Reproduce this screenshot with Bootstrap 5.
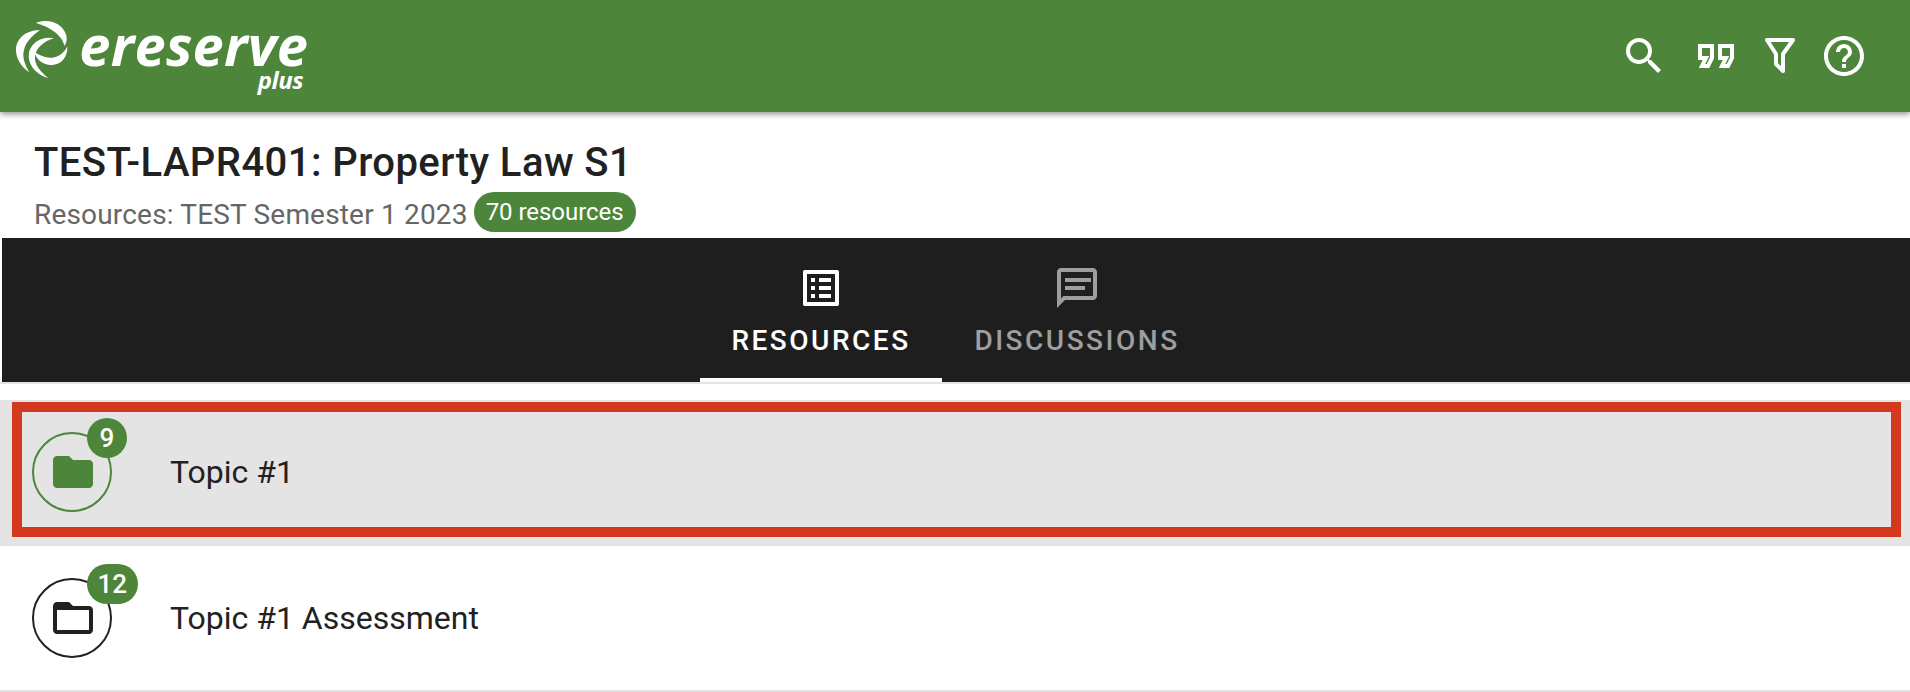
<!DOCTYPE html>
<html lang="en">
<head>
<meta charset="utf-8">
<title>eReserve Plus</title>
<link href="https://cdn.jsdelivr.net/npm/bootstrap@5.3.0/dist/css/bootstrap.min.css" rel="stylesheet">
<style>
html,body{height:100%;}
body{font-family:Roboto,"Liberation Sans",sans-serif;color:#212121;background:#fff;overflow:hidden;}
.top-bar{height:112px;background:#4d853a;box-shadow:0 2px 6px rgba(0,0,0,.45);position:relative;z-index:2;padding:0 42px 0 15px;}
.brand-wrap{height:80px;margin-top:-14px;}
.brand-mark{width:53.33px;height:60px;flex:none;margin-right:11px;margin-top:2px;}
.brand-stack{line-height:1;color:#fff;font-family:"Open Sans",sans-serif;font-style:italic;font-weight:700;padding:8px 0 2px;margin-bottom:-7px;}
.brand-name{font-size:56px;letter-spacing:.2px;line-height:42px;display:block;}
.brand-sub{font-size:24px;font-weight:700;line-height:18px;display:block;text-align:right;margin-top:6px;margin-right:5px;letter-spacing:-.5px;}
.top-icon{width:48px;height:48px;fill:#fff;display:block;}
.top-icons{gap:16px;}
.icon-quote{margin-left:8px;}
.icon-funnel{fill:none;stroke:#fff;stroke-width:2;stroke-linejoin:round;}
.head-block{padding:26px 34px 0;height:126px;}
.course-title{font-size:40px;font-weight:500;line-height:50px;margin:0;letter-spacing:.43px;}
.sub-line{margin-top:7px;font-size:28px;line-height:40px;color:#666;letter-spacing:.18px;}
.count-pill{background:#4d853a;color:#fff;border-radius:20px;font-size:24px;height:40px;line-height:40px;padding:0 12px;margin-left:6px;margin-top:-6px;letter-spacing:-.05px;}
.tab-strip{margin-left:2px;height:144px;background:#1e1e1e;}
.tab-item{color:#9e9e9e;text-decoration:none;display:flex;flex-direction:column;align-items:center;height:144px;padding-top:26px;font-size:28px;font-weight:500;letter-spacing:2.5px;line-height:36px;}
.tab-item svg{width:48px;height:48px;fill:currentColor;margin-bottom:11px;}
.tab-item.is-on{color:#fff;width:242px;border-bottom:4px solid #fff;}
.tab-item.is-off{width:270px;}
.under-rule{height:2px;background:#e2e2e2;}
.rows{margin-top:16px;}
.topic-row{height:146px;padding-left:32px;font-size:32px;position:relative;border-bottom:2px solid #e2e2e2;}
.topic-row.is-sel{background:#e4e4e4;}
.sel-frame{position:absolute;left:12px;right:9px;top:2px;height:135px;border:10px solid #d3391f;pointer-events:none;}
.topic-ring{width:80px;height:80px;border:2px solid #212121;border-radius:50%;position:relative;flex:none;margin-right:58px;color:#212121;}
.topic-ring svg{width:48px;height:48px;fill:currentColor;margin-left:2px;}
.is-sel .topic-ring{border-color:#4d853a;color:#4d853a;}
.ring-count{position:absolute;left:53px;top:-16px;min-width:40px;height:40px;padding:0 10.5px;border-radius:20px;background:#4d853a;color:#fff;font-size:26px;font-weight:500;line-height:40px;text-align:center;}
</style>
</head>
<body>
<header class="top-bar d-flex align-items-center justify-content-between">
  <div class="brand-wrap d-flex align-items-center">
    <svg class="brand-mark" viewBox="15 15 160 180" fill="#fff" aria-hidden="true">
      <path d="M78 24C112 10 155 22 168 58C172 72 170 85 163 92C158 66 128 38 78 24Z"/>
      <path d="M90 46C52 44 20 68 18 102C17 128 32 155 58 172C44 148 36 125 42 105C47 82 66 62 90 46Z"/>
      <path d="M132 70C102 62 68 78 58 108C50 140 70 176 116 190C92 170 72 150 75 122C78 100 102 78 132 70Z"/>
      <path d="M72 108C76 130 98 152 128 150C155 148 174 125 172 94C162 116 142 130 120 128C100 126 84 120 72 108Z"/>
    </svg>
    <div class="brand-stack"><span class="brand-name">ereserve</span><span class="brand-sub">plus</span></div>
  </div>
  <div class="top-icons d-flex align-items-center">
    <svg class="top-icon" viewBox="0 0 24 24"><path d="M15.5 14h-.79l-.28-.27A6.471 6.471 0 0 0 16 9.5 6.5 6.5 0 1 0 9.5 16c1.61 0 3.09-.59 4.23-1.57l.27.28v.79l5 4.99L20.49 19l-4.99-5zm-6 0C7.01 14 5 11.99 5 9.5S7.01 5 9.5 5 14 7.01 14 9.5 11.99 14 9.5 14z"/></svg>
    <svg class="top-icon icon-quote" viewBox="0 0 24 24"><path d="M18.62 18h-5.24l2-4H13V6h8v7.24L18.62 18zm-2-2h.76L19 12.76V8h-4v4h3.62l-2 4zm-8 2H3.38l2-4H3V6h8v7.24L8.62 18zm-2-2h.76L9 12.76V8H5v4h3.62l-2 4z"/></svg>
    <svg class="top-icon icon-funnel" viewBox="0 0 24 24"><path d="M5.500 4H18.500L13.500 11V19.500L10 16V11Z"/></svg>
    <svg class="top-icon" viewBox="0 0 24 24"><path d="M11 18h2v-2h-2v2zm1-16C6.48 2 2 6.48 2 12s4.48 10 10 10 10-4.48 10-10S17.52 2 12 2zm0 18c-4.410 0-8-3.590-8-8s3.590-8 8-8 8 3.590 8 8-3.590 8-8 8zm0-14c-2.210 0-4 1.790-4 4h2c0-1.100.9-2 2-2s2 .9 2 2c0 2-3 1.750-3 5h2c0-2.250 3-2.500 3-5 0-2.210-1.790-4-4-4z"/></svg>
  </div>
</header>
<section class="head-block">
  <h1 class="course-title">TEST-LAPR401: Property Law S1</h1>
  <div class="sub-line d-flex align-items-center">Resources: TEST Semester 1 2023<span class="count-pill">70 resources</span></div>
</section>
<nav class="tab-strip d-flex justify-content-center">
  <a class="tab-item is-on" href="#">
    <svg viewBox="0 0 24 24"><path d="M19 5v14H5V5h14m1.100-2H3.900c-.5 0-.9.4-.9.9v16.200c0 .4.4.9.9.9h16.200c.4 0 .9-.5.9-.9V3.900c0-.5-.5-.9-.9-.9zM11 7h6v2h-6V7zm0 4h6v2h-6v-2zm0 4h6v2h-6zM7 7h2v2H7zm0 4h2v2H7zm0 4h2v2H7z"/></svg>
    RESOURCES
  </a>
  <a class="tab-item is-off" href="#">
    <svg viewBox="0 0 24 24"><path d="M20 2H4c-1.100 0-2 .9-2 2v18l4-4h14c1.100 0 2-.9 2-2V4c0-1.100-.9-2-2-2zm0 14H5.200L4 17.200V4h16v12zM6 7h13v2H6zm0 4h10v2H6z"/></svg>
    DISCUSSIONS
  </a>
</nav>
<div class="under-rule"></div>
<main class="rows">
  <div class="topic-row is-sel d-flex align-items-center">
    <div class="topic-ring d-flex align-items-center justify-content-center">
      <svg viewBox="0 0 24 24"><path d="M10 4H4c-1.100 0-1.990.9-1.990 2L2 18c0 1.100.9 2 2 2h16c1.100 0 2-.9 2-2V8c0-1.100-.9-2-2-2h-8l-2-2z"/></svg>
      <span class="ring-count">9</span>
    </div>
    <span>Topic #1</span>
    <div class="sel-frame"></div>
  </div>
  <div class="topic-row d-flex align-items-center">
    <div class="topic-ring d-flex align-items-center justify-content-center">
      <svg viewBox="0 0 24 24"><path d="M20 6h-8l-2-2H4c-1.100 0-1.990.9-1.990 2L2 18c0 1.100.9 2 2 2h16c1.100 0 2-.9 2-2V8c0-1.100-.9-2-2-2zm0 12H4V8h16v10z"/></svg>
      <span class="ring-count">12</span>
    </div>
    <span>Topic #1 Assessment</span>
  </div>
</main>
<script src="https://cdn.jsdelivr.net/npm/bootstrap@5.3.0/dist/js/bootstrap.bundle.min.js"></script>
</body>
</html>
